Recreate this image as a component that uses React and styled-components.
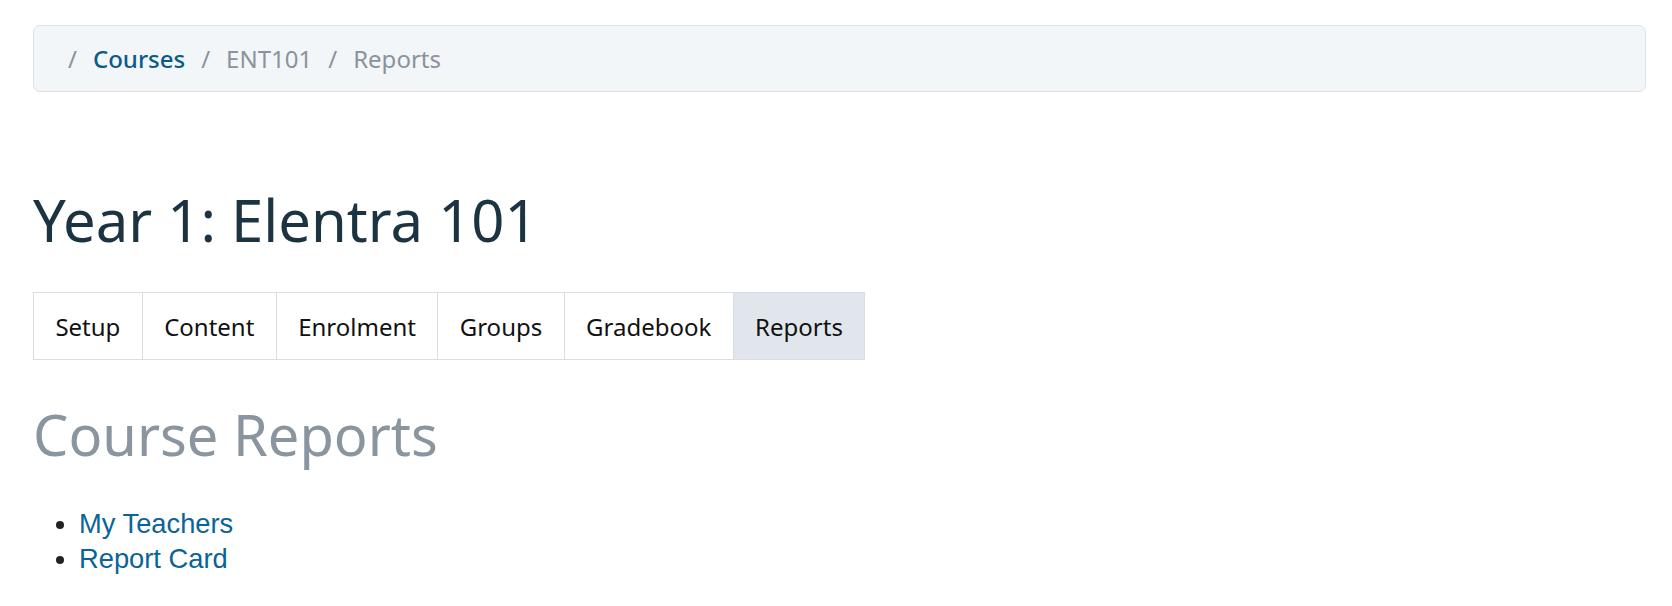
import React from 'react';
import styled, { createGlobalStyle } from 'styled-components';

const GlobalStyle = createGlobalStyle`
  body {
    margin: 0;
    background: #ffffff;
    font-family: "Noto Sans", "DejaVu Sans", sans-serif;
  }
`;

const Page = styled.div`
  padding: 25px 26px 0 33px;
`;

const Breadcrumb = styled.nav`
  display: flex;
  align-items: center;
  height: 65px;
  padding: 0 34px;
  background: #f3f6f9;
  border: 1px solid #dde2e8;
  border-radius: 7px;
  font-size: 24px;
`;

const Crumb = styled.span`
  color: ${(p) => (p.$link ? '#0c5a8c' : '#8a939b')};
  font-weight: ${(p) => (p.$link ? 500 : 400)};
`;

const Sep = styled.span`
  color: #8a939b;
  margin: 0 16px 0 ${(p) => (p.$first ? '0' : '16px')};
`;

const Title = styled.h1`
  margin: 94px 0 0;
  font-size: 58px;
  font-weight: 400;
  line-height: 68px;
  color: #1c3442;
`;

const Tabs = styled.ul`
  display: inline-flex;
  list-style: none;
  margin: 38px 0 0;
  padding: 0;
  border: 1px solid #d9dee4;
`;

const Tab = styled.li`
  display: flex;
  align-items: center;
  height: 66px;
  padding: 0 21.4px;
  font-size: 24px;
  color: #111;
  background: ${(p) => (p.$active ? '#e1e6ed' : '#fff')};
  & + & {
    border-left: 1px solid #d9dee4;
  }
`;

const SubTitle = styled.h2`
  margin: 40px 0 0;
  font-size: 56px;
  font-weight: 400;
  line-height: 68px;
  color: #8a959f;
`;

const ReportList = styled.ul`
  margin: 38px 0 0;
  padding-left: 46px;
  font-family: "Liberation Sans", Arial, sans-serif;
  font-size: 27.3px;
  line-height: 35px;
  color: #222;
`;

const ReportLink = styled.a`
  color: #0b6398;
  text-decoration: none;
`;

const tabs = ['Setup', 'Content', 'Enrolment', 'Groups', 'Gradebook', 'Reports'];

export default function App() {
  return (
    <>
      <GlobalStyle />
      <Page>
        <Breadcrumb>
          <Sep $first>/</Sep>
          <Crumb $link>Courses</Crumb>
          <Sep>/</Sep>
          <Crumb>ENT101</Crumb>
          <Sep>/</Sep>
          <Crumb>Reports</Crumb>
        </Breadcrumb>
        <Title>Year 1: Elentra 101</Title>
        <div>
          <Tabs>
            {tabs.map((t) => (
              <Tab key={t} $active={t === 'Reports'}>{t}</Tab>
            ))}
          </Tabs>
        </div>
        <SubTitle>Course Reports</SubTitle>
        <ReportList>
          <li><ReportLink href="#">My Teachers</ReportLink></li>
          <li><ReportLink href="#">Report Card</ReportLink></li>
        </ReportList>
      </Page>
    </>
  );
}
